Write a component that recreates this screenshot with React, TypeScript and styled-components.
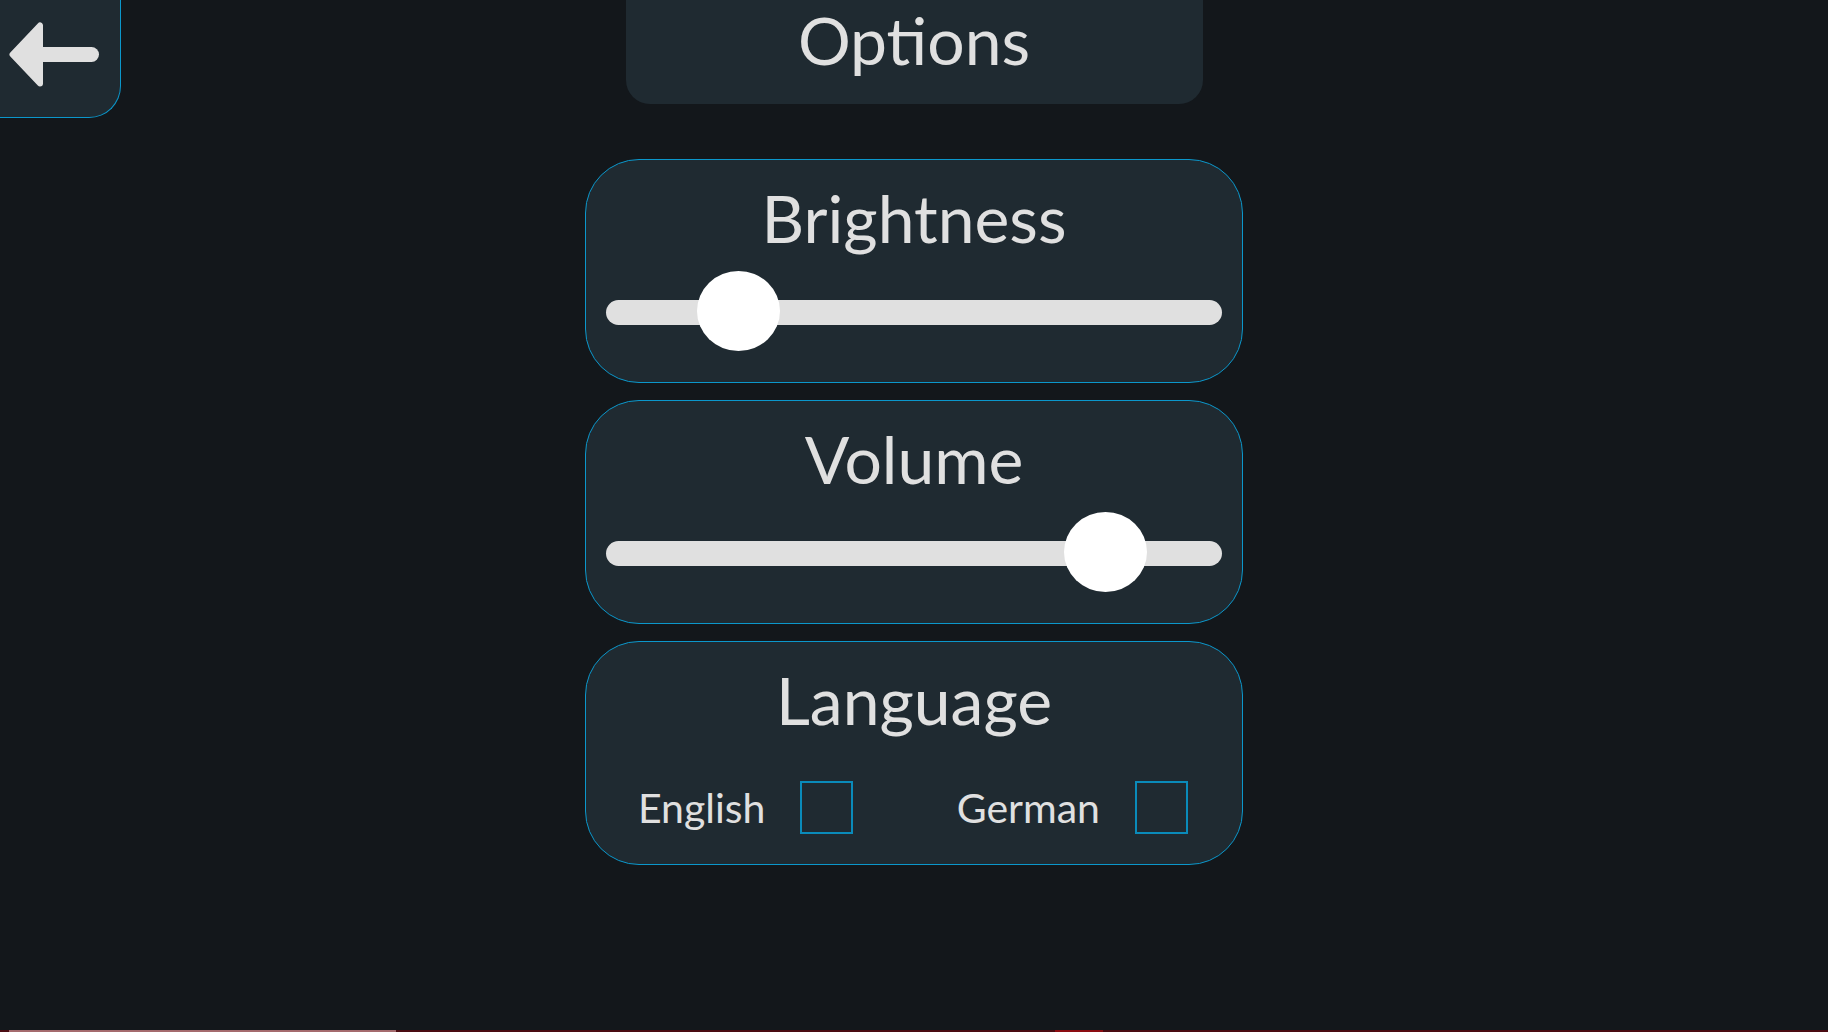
import React from 'react';
import styled, { createGlobalStyle } from 'styled-components';

const PageBg = '#13171b';
const PanelBg = '#1f2a31';
const TextColor = '#e0e0e0';
const Accent = '#0b97cb';
const BoxAccent = '#0a8bba';

const GlobalStyle = createGlobalStyle`
  html, body {
    margin: 0;
    padding: 0;
    background: ${PageBg};
    overflow: hidden;
  }
  * {
    box-sizing: border-box;
  }
`;

type SliderProps = {
  value: number
};

const Slider = ({ value }: SliderProps) => (
  <SliderArea>
    <Track />
    <Thumb $value={value} />
  </SliderArea>
);

type LanguageOptionProps = {
  label: string
};

const LanguageOption = ({ label }: LanguageOptionProps) => (
  <OptionGroup>
    <OptionLabel>{label}</OptionLabel>
    <CheckBox type={'button'} aria-label={label} />
  </OptionGroup>
);

const BackArrow = () => (
  <svg width={120} height={117} viewBox={'0 0 120 117'}>
    <polygon
      points={'12.5,54.5 40,25.5 40,83.5'}
      fill={TextColor}
      stroke={TextColor}
      strokeWidth={6}
      strokeLinejoin={'round'}
    />
    <line
      x1={40}
      y1={54.5}
      x2={91.5}
      y2={54.5}
      stroke={TextColor}
      strokeWidth={15}
      strokeLinecap={'round'}
    />
  </svg>
);

export default function App() {
  return (
    <>
      <GlobalStyle />
      <Page>
        <TopBar>
          <BackButton type={'button'} aria-label={'Back'}>
            <BackArrow />
          </BackButton>
          <Heading>Options</Heading>
        </TopBar>
        <PanelList>
          <Panel>
            <PanelTitle>Brightness</PanelTitle>
            <Slider value={17} />
          </Panel>
          <Panel>
            <PanelTitle>Volume</PanelTitle>
            <Slider value={86} />
          </Panel>
          <Panel>
            <PanelTitle>Language</PanelTitle>
            <LanguageRow>
              <LanguageOption label={'English'} />
              <LanguageOption label={'German'} />
            </LanguageRow>
          </Panel>
        </PanelList>
        <LoadBar />
      </Page>
    </>
  );
}

const Page = styled.div`
  display: flex;
  flex-direction: column;
  width: 100vw;
  height: 100vh;
  background: ${PageBg};
  font-family: Lato, 'Open Sans', sans-serif;
  color: ${TextColor};
`;

const TopBar = styled.header`
  display: grid;
  grid-template-columns: 1fr 577px 1fr;
  align-items: start;
`;

const BackButton = styled.button`
  justify-self: start;
  width: 121px;
  height: 118px;
  padding: 0;
  background: ${PanelBg};
  border: none;
  border-right: 1px solid ${Accent};
  border-bottom: 1px solid ${Accent};
  border-bottom-right-radius: 32px;
  cursor: pointer;
  display: block;
  svg {
    display: block;
  }
`;

const Heading = styled.h1`
  margin: 0;
  height: 104px;
  background: ${PanelBg};
  border-bottom-left-radius: 24px;
  border-bottom-right-radius: 24px;
  font-size: 66px;
  font-weight: 400;
  line-height: 80px;
  text-align: center;
`;

const PanelList = styled.main`
  display: flex;
  flex-direction: column;
  align-items: center;
  gap: 17px;
  margin-top: 41px;
`;

const Panel = styled.section`
  width: 658px;
  height: 224px;
  padding: 18px 20px 0;
  background: ${PanelBg};
  border: 1px solid ${Accent};
  border-radius: 54px;
`;

const PanelTitle = styled.h2`
  margin: 0;
  font-size: 66px;
  font-weight: 400;
  line-height: 80px;
  text-align: center;
`;

const SliderArea = styled.div`
  position: relative;
  height: 80px;
  margin-top: 14px;
  display: flex;
  align-items: center;
`;

const Track = styled.div`
  width: 100%;
  height: 25px;
  border-radius: 13px;
  background: ${TextColor};
`;

const Thumb = styled.div<{ $value: number }>`
  position: absolute;
  top: -1px;
  left: calc((100% - 83px) * ${({ $value }) => $value / 100});
  width: 83px;
  height: 80px;
  border-radius: 50%;
  background: #ffffff;
`;

const LanguageRow = styled.div`
  display: flex;
  justify-content: space-between;
  align-items: center;
  margin-top: 41px;
  padding: 0 34px 0 32px;
`;

const OptionGroup = styled.label`
  display: flex;
  align-items: center;
  gap: 35px;
`;

const OptionLabel = styled.span`
  font-size: 41px;
  line-height: 52px;
`;

const CheckBox = styled.button`
  width: 53px;
  height: 53px;
  padding: 0;
  background: transparent;
  border: 2px solid ${BoxAccent};
  cursor: pointer;
`;

const LoadBar = styled.div`
  margin-top: auto;
  height: 2px;
  background: linear-gradient(
    to right,
    #4a0c12 0,
    #4a0c12 9px,
    #a46b6e 9px,
    #a46b6e 396px,
    #4a0c12 396px,
    #4a0c12 1055px,
    #8c0d12 1055px,
    #8c0d12 1103px,
    #4a0c12 1103px
  );
`;
